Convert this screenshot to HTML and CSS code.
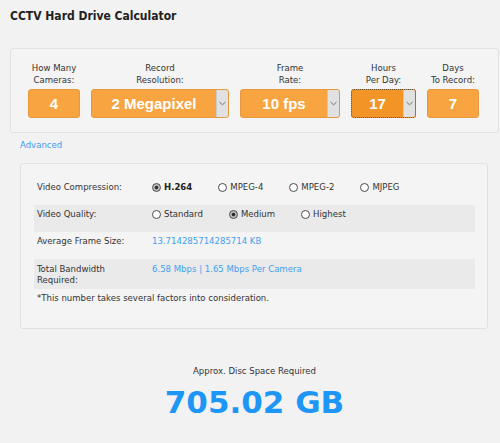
FILE: index.html
```html
<!DOCTYPE html>
<html>
<head>
<meta charset="utf-8">
<link rel="stylesheet" href="styles.css">
</head>
<body>
<div class="page">
  <h1 class="title">CCTV Hard Drive Calculator</h1>

  <div class="panel panel-top">
    <div class="fields">
      <div class="field f-cam">
        <div class="lbl">How Many<br>Cameras:</div>
        <div class="box"><span class="val">4</span></div>
      </div>
      <div class="field f-res">
        <div class="lbl">Record<br>Resolution:</div>
        <div class="box sel"><span class="val">2 Megapixel</span><span class="arrow"><svg width="7" height="5" viewBox="0 0 7 5"><polyline points="0.5,1 3.5,3.8 6.5,1" fill="none" stroke="#777" stroke-width="1"/></svg></span></div>
      </div>
      <div class="field f-fps">
        <div class="lbl">Frame<br>Rate:</div>
        <div class="box sel"><span class="val">10 fps</span><span class="arrow"><svg width="7" height="5" viewBox="0 0 7 5"><polyline points="0.5,1 3.5,3.8 6.5,1" fill="none" stroke="#777" stroke-width="1"/></svg></span></div>
      </div>
      <div class="field f-hrs">
        <div class="lbl">Hours<br>Per Day:</div>
        <div class="box sel focus"><span class="val">17</span><span class="arrow"><svg width="7" height="5" viewBox="0 0 7 5"><polyline points="0.5,1 3.5,3.8 6.5,1" fill="none" stroke="#777" stroke-width="1"/></svg></span></div>
      </div>
      <div class="field f-days">
        <div class="lbl">Days<br>To Record:</div>
        <div class="box"><span class="val">7</span></div>
      </div>
    </div>
  </div>

  <a class="adv-link" href="#">Advanced</a>

  <div class="panel panel-adv">
    <div class="row">
      <div class="k">Video Compression:</div>
      <div class="v opts">
        <span class="opt"><span class="radio on"></span><b>H.264</b></span>
        <span class="opt"><span class="radio"></span>MPEG-4</span>
        <span class="opt"><span class="radio"></span>MPEG-2</span>
        <span class="opt"><span class="radio"></span>MJPEG</span>
      </div>
    </div>
    <div class="row band">
      <div class="k">Video Quality:</div>
      <div class="v opts">
        <span class="opt"><span class="radio"></span>Standard</span>
        <span class="opt"><span class="radio on"></span>Medium</span>
        <span class="opt"><span class="radio"></span>Highest</span>
      </div>
    </div>
    <div class="row">
      <div class="k">Average Frame Size:</div>
      <div class="v blue">13.714285714285714 KB</div>
    </div>
    <div class="row band tall">
      <div class="k">Total Bandwidth<br>Required:</div>
      <div class="v blue">6.58 Mbps | 1.65 Mbps Per Camera</div>
    </div>
    <p class="note">*This number takes several factors into consideration.</p>
  </div>

  <div class="result">
    <div class="r-label">Approx. Disc Space Required</div>
    <div class="r-value">705.02 GB</div>
  </div>
</div>
</body>
</html>
```

FILE: styles.css
```css
html, body {
  margin: 0;
  padding: 0;
  background: #f2f2f2;
  overflow: hidden;
}
body {
  font-family: "DejaVu Sans Condensed", "DejaVu Sans", sans-serif;
  font-size: 9.5px;
  color: #333;
}
.page {
  width: 489px;
  margin-left: 10px;
}
.title {
  margin: 8px 0 0 0;
  font-size: 12px;
  line-height: 16px;
  font-weight: bold;
  color: #222;
}
.panel {
  background: #f4f4f4;
  border: 1px solid #e2e2e2;
  border-radius: 3px;
  box-sizing: border-box;
}
.panel-top {
  margin-top: 24px;
  height: 85px;
  padding: 13px 0 0 17px;
}
.fields {
  display: flex;
  gap: 11px;
  align-items: flex-end;
}
.field {
  display: flex;
  flex-direction: column;
  align-items: center;
}
.lbl {
  text-align: center;
  line-height: 12px;
  color: #333;
  margin-bottom: 3px;
}
.box {
  box-sizing: border-box;
  height: 29px;
  background: #f8a541;
  border: 1px solid #e6993c;
  border-radius: 3px;
  display: flex;
  align-items: stretch;
  width: 100%;
  overflow: hidden;
}
.val {
  flex: 1;
  display: flex;
  align-items: center;
  justify-content: center;
  color: #fff;
  font-family: "Liberation Sans", Arial, sans-serif;
  font-weight: bold;
  font-size: 15px;
}
.arrow {
  width: 11px;
  background: #e1e1e1;
  border-left: 1px solid #c9c9c9;
  display: flex;
  align-items: center;
  justify-content: center;
}
.f-cam, .f-days { width: 52px; }
.f-res { width: 138px; }
.f-fps { width: 100px; }
.f-hrs { width: 65px; }
.focus {
  background: #f39426;
  border: 1px dotted #6a4a20;
}
.adv-link {
  display: block;
  margin: 6px 0 0 10px;
  line-height: 12px;
  color: #3d9bf0;
  text-decoration: none;
}
.panel-adv {
  margin: 12px 0 0 10px;
  width: 468px;
  height: 166px;
  padding: 14px 12px 0 13px;
}
.row {
  display: grid;
  grid-template-columns: 115px 1fr;
  box-sizing: border-box;
  height: 27px;
  padding: 3px 3px 0 3px;
  line-height: 12px;
}
.row.tall { height: 30px; padding-top: 4px; line-height: 11px; }
.band { background: #eaeaea; }
.opts {
  display: flex;
  gap: 26px;
}
.opt {
  display: flex;
  align-items: center;
  height: 12px;
}
.opt b { font-weight: bold; color: #222; }
.radio {
  box-sizing: border-box;
  width: 9px;
  height: 9px;
  border: 1px solid #4a4a4a;
  border-radius: 50%;
  background: #fff;
  margin-right: 3px;
}
.radio.on {
  background: radial-gradient(circle, #333 0 1.6px, #bdbdbd 2.2px);
}
.blue { color: #3fa1f2; }
.note {
  margin: 3px 0 0 3px;
  line-height: 12px;
}
.result {
  text-align: center;
  padding-top: 36px;
}
.r-label {
  line-height: 12px;
  color: #333;
}
.r-value {
  margin-top: 7px;
  font-family: "DejaVu Sans", sans-serif;
  font-weight: bold;
  font-size: 31px;
  line-height: 36px;
  color: #1d96f6;
}
```
